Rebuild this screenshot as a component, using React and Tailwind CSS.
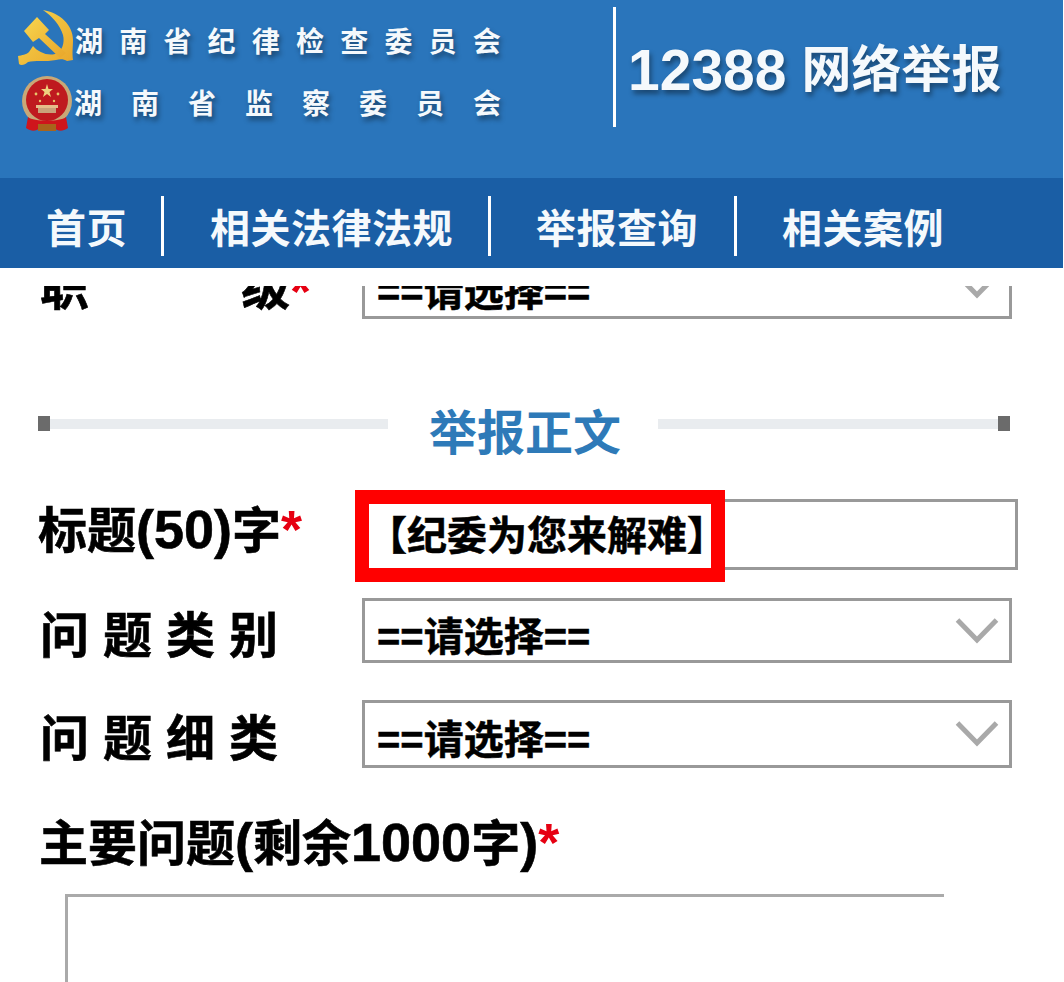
import React from "react";

const CJK = "font-['Liberation_Sans','Noto_Sans_CJK_SC',sans-serif]";

function PartyEmblem() {
  return (
    <svg width="56" height="60" viewBox="17 9 56 60" className="shrink-0">
      <defs>
        <linearGradient id="gold" x1="0" y1="0" x2="1" y2="1">
          <stop offset="0" stopColor="#f7d64f" />
          <stop offset="1" stopColor="#e9a62a" />
        </linearGradient>
      </defs>
      {/* sickle */}
      <path
        d="M43 10 C60 13 73 25 73 40 C73 47 72 52 73 60 L67 61 C64 59 60 59 56 60 C46 62 34 60 28 62 C25 65 21 66 19 64 L18 56 C22 55 26 55 29 52 L33 46 C38 52 47 56 55 54 C62 52 65 43 63 35 C60 25 52 16 43 10 Z"
        fill="url(#gold)"
      />
      {/* hammer */}
      <path d="M37 17 L49 30 L45 34 L66 53 L60 58 L39 38 L33 42 L24 31 Z" fill="url(#gold)" />
    </svg>
  );
}

function NationalEmblem() {
  return (
    <svg width="50" height="60" viewBox="22 73 50 60" className="shrink-0">
      <circle cx="47" cy="101" r="25" fill="#c9a877" />
      <circle cx="47" cy="100" r="21" fill="#bf1a1f" />
      <polygon points="47,84 48.5,89 53,89 49.5,92 51,97 47,94 43,97 44.5,92 41,89 45.5,89" fill="#eed27f" />
      <circle cx="36" cy="94" r="1.4" fill="#e8c56a" />
      <circle cx="58" cy="94" r="1.4" fill="#e8c56a" />
      <circle cx="40" cy="101" r="1.2" fill="#e8c56a" />
      <circle cx="54" cy="101" r="1.2" fill="#e8c56a" />
      <rect x="36" y="105" width="22" height="3" fill="#e5bd8a" />
      <rect x="38" y="108" width="18" height="5" fill="#c9a27a" />
      <path d="M28 117 C34 122 60 122 66 117 L68 128 C62 132 58 131 54 128 L40 128 C36 131 32 132 26 128 Z" fill="#cf151c" />
      <rect x="38" y="124" width="18" height="7" fill="#a8641c" />
    </svg>
  );
}

function Chevron() {
  return (
    <svg width="44" height="28" viewBox="0 0 44 28" className="shrink-0">
      <path d="M2.5 3 L22 23 L41.5 3" fill="none" stroke="#a9a9a9" strokeWidth="5" />
    </svg>
  );
}

function Star({ className = "" }) {
  return <span className={`text-[54px] text-[#e60012] [-webkit-text-stroke:0] ${className}`}>*</span>;
}

function Latin({ children }) {
  return <span className="text-[54px]">{children}</span>;
}

function Select({ className = "" }) {
  return (
    <div className={`flex w-[650px] items-center justify-between border-[3px] border-[#999999] pl-[12px] pr-[10px] ${className}`}>
      <span className="mt-[12px] text-[40px] leading-none font-bold text-black [-webkit-text-stroke:0.5px_#000]">==请选择==</span>
      <Chevron />
    </div>
  );
}

function SectionLine({ flip }) {
  return (
    <div className={`mt-[6px] flex h-[15px] items-center ${flip ? "w-[352px] flex-row-reverse" : "w-[350px]"}`}>
      <div className="h-[15px] w-[12px] bg-[#6b6b6b]" />
      <div className="h-[10px] flex-1 bg-[#e9ecef]" />
    </div>
  );
}

function Label({ children, className = "" }) {
  return (
    <div className={`w-[322px] shrink-0 text-[49px] leading-none font-bold whitespace-nowrap text-black [-webkit-text-stroke:0.6px_#000] ${className}`}>
      {children}
    </div>
  );
}

export default function App() {
  const shadow = "[text-shadow:2px_4px_5px_rgba(0,0,0,0.4)]";
  return (
    <div className={`h-[982px] w-[1064px] overflow-hidden bg-white ${CJK}`}>
      <header className="flex h-[178px] w-[1063px] items-start bg-[#2a75bb] text-[#f5f9fc]">
        <div className="w-[612px] shrink-0 pl-[17px] pt-[9px]">
          <div className="flex h-[60px] items-center">
            <PartyEmblem />
            <span className={`ml-[2px] mt-[8px] text-[28px] leading-none font-bold tracking-[16.2px] whitespace-nowrap ${shadow}`}>
              湖南省纪律检查委员会
            </span>
          </div>
          <div className="mt-[4px] flex h-[60px] items-center pl-[5px]">
            <NationalEmblem />
            <span className={`ml-[2px] mt-[4px] text-[28px] leading-none font-bold tracking-[29px] whitespace-nowrap ${shadow}`}>
              湖南省监察委员会
            </span>
          </div>
        </div>
        <div className="ml-[1px] mt-[7px] h-[120px] w-[3px] bg-white" />
        <div className={`ml-[12px] mt-[40px] flex h-[60px] items-center font-bold whitespace-nowrap ${shadow}`}>
          <span className="text-[57px] leading-none">12388</span>
          <span className="ml-[15px] text-[50px] leading-none">网络举报</span>
        </div>
      </header>

      <nav className="flex h-[90px] w-[1063px] items-center bg-[#1a5ea5] pl-[46px] pt-[6px] text-[40px] font-bold text-[#f5f9fc]">
        <span className="mt-[6px] leading-none tracking-[0.5px]">首页</span>
        <span className="ml-[34px] mr-[46px] h-[60px] w-[3px] bg-white" />
        <span className="mt-[6px] leading-none tracking-[0.5px]">相关法律法规</span>
        <span className="ml-[35px] mr-[45px] h-[60px] w-[3px] bg-white" />
        <span className="mt-[6px] leading-none tracking-[0.5px]">举报查询</span>
        <span className="ml-[36px] mr-[45px] h-[60px] w-[3px] bg-white" />
        <span className="mt-[6px] leading-none tracking-[0.5px]">相关案例</span>
      </nav>

      {/* the form is scrolled: first row is cut off above */}
      <div className="mt-[18px] h-[696px] overflow-hidden pl-[40px]">
        <div className="-mt-[33px] flex items-center">
          <Label>
            <div className="flex items-end">
              <div className="flex w-[250px] justify-between">
                <span>职</span>
                <span>级</span>
              </div>
              <Star className="translate-y-[5px]" />
            </div>
          </Label>
          <Select className="h-[66px]" />
        </div>

        <div className="-ml-[2px] mt-[91px] flex items-start">
          <SectionLine />
          <span className="ml-[41px] text-[48px] leading-none font-bold whitespace-nowrap text-[#2e7ab8]">举报正文</span>
          <div className="ml-[37px]">
            <SectionLine flip />
          </div>
        </div>

        <div className="mt-[41px] flex items-start">
          <Label className="-ml-[2px] mr-[2px] pt-[3px]">
            标题<Latin>(50)</Latin>字
            <Star />
          </Label>
          <div className="relative h-[71px] w-[656px] border-[3px] border-[#999999]">
            <div className="absolute -left-[10px] -top-[12px] flex h-[92px] w-[370px] items-center border-[14px] border-[#ff0000] bg-white">
              <span className="-ml-[2px] text-[40px] leading-none font-bold whitespace-nowrap text-black [-webkit-text-stroke:0.5px_#000]">
                【纪委为您来解难】
              </span>
            </div>
          </div>
        </div>

        <div className="mt-[28px] flex items-center">
          <Label className="pt-[12px]">
            <span className="tracking-[14px]">问题类别</span>
          </Label>
          <Select className="h-[65px]" />
        </div>

        <div className="mt-[37px] flex items-center">
          <Label className="pt-[10px]">
            <span className="tracking-[14px]">问题细类</span>
          </Label>
          <Select className="h-[68px]" />
        </div>

        <div className="mt-[47px] text-[49px] leading-none font-bold whitespace-nowrap text-black [-webkit-text-stroke:0.6px_#000]">
          <span className="-ml-[1px]">主要问题<Latin>(</Latin>剩余<Latin>1000</Latin>字<Latin>)</Latin></span>
          <Star />
        </div>

        <div className="ml-[25px] mt-[25px] h-[200px] w-[879px] border-l-[3px] border-t-[3px] border-[#aaaaaa]" />
      </div>
    </div>
  );
}
